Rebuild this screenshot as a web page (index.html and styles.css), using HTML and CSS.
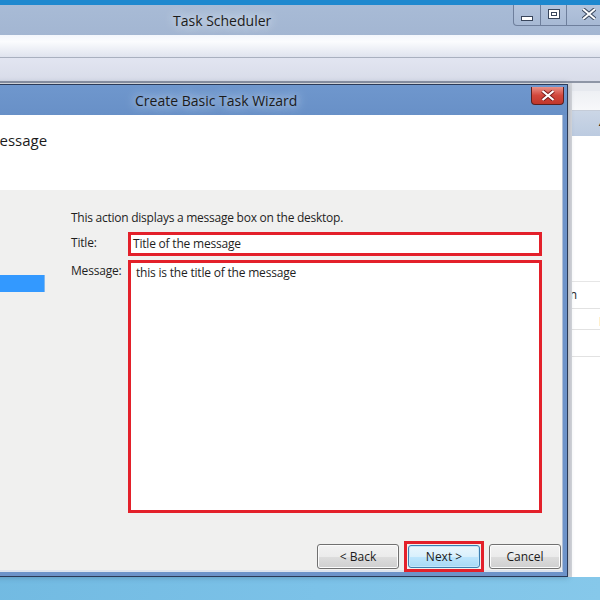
FILE: index.html
```html
<!DOCTYPE html>
<html>
<head>
<meta charset="utf-8">
<link rel="stylesheet" href="styles.css">
</head>
<body>
<div class="desktop">
  <div class="topstrip"></div>
  <div class="mainwin">
    <div class="titlebar">
      <span class="wintitle">Task Scheduler</span>
      <div class="controls">
        <div class="ctl ctl-min"><svg width="12" height="6" viewBox="0 0 12 6"><rect x="0.5" y="0.5" width="11" height="4" fill="#fff" stroke="#39465c"/></svg></div>
        <div class="ctl ctl-max"><svg width="12" height="10" viewBox="0 0 12 10"><rect x="0.5" y="0.5" width="11" height="9" fill="#fff" stroke="#39465c"/><rect x="3.5" y="3.5" width="5" height="3" fill="none" stroke="#39465c"/></svg></div>
        <div class="ctl ctl-close"><svg width="14" height="12" viewBox="0 0 14 12"><path d="M1 1 L13 11 M13 1 L1 11" stroke="#39465c" stroke-width="4"/><path d="M1 1 L13 11 M13 1 L1 11" stroke="#fff" stroke-width="2"/></svg></div>
      </div>
    </div>
    <div class="menubar"></div>
    <div class="toolbar"></div>
    <div class="content">
      <div class="rightpane">
        <div class="rp-top"></div>
        <div class="rp-head"><span class="rp-arrow">▲</span></div>
        <div class="rp-body"></div>
        <div class="rp-row rp-row-a"><span>Action</span></div>
        <div class="rp-row rp-row-b"><span class="rp-b">I</span></div>
        <div class="rp-row rp-row-c"></div>
        <div class="rp-rest"></div>
      </div>
    </div>
  </div>

  <div class="dialog">
    <div class="dlg-titlebar">
      <span class="dlg-title">Create Basic Task Wizard</span>
      <div class="dlg-close"><svg width="14" height="11" viewBox="0 0 14 11"><path d="M1.5 1 L12.5 10 M12.5 1 L1.5 10" stroke="#7a1d1d" stroke-width="4"/><path d="M1.5 1 L12.5 10 M12.5 1 L1.5 10" stroke="#fff" stroke-width="2.2"/></svg></div>
    </div>
    <div class="dlg-client">
      <div class="dlg-header"><span class="dlg-heading">Message</span></div>
      <div class="dlg-body">
        <div class="dlg-nav">
          <div class="nav-sel"></div>
        </div>
        <div class="dlg-main">
          <p class="intro">This action displays a message box on the desktop.</p>
          <div class="field-row">
            <span class="label">Title:</span>
            <div class="input">Title of the message</div>
          </div>
          <div class="field-row">
            <span class="label">Message:</span>
            <div class="textarea">this is the title of the message</div>
          </div>
          <div class="buttons">
            <div class="btn">&lt; Back</div>
            <div class="btn-mark"><div class="btn btn-default">Next &gt;</div></div>
            <div class="btn">Cancel</div>
          </div>
        </div>
      </div>
    </div>
  </div>
</div>
</body>
</html>
```

FILE: styles.css
```css
* { box-sizing: border-box; }
html, body { margin: 0; padding: 0; }
body {
  width: 600px;
  height: 600px;
  overflow: hidden;
  font-family: "Open Sans", "Noto Sans", sans-serif;
  color: #1e1e1e;
}
.desktop {
  position: relative;
  width: 600px;
  height: 600px;
  overflow: hidden;
  background: linear-gradient(100deg, #6fb8e0 0%, #7cc2e8 60%, #86c8ea 100%);
}
.topstrip {
  height: 5px;
  background: #1e88cf;
}
.mainwin {
  height: 572px;
  display: flex;
  flex-direction: column;
  background: #dfe3ee;
}
.titlebar {
  flex-shrink: 0;
  height: 30px;
  display: flex;
  align-items: flex-start;
  background: linear-gradient(#a8bbd6, #a3b6d2);
}
.wintitle {
  margin-left: 173px;
  margin-top: 6px;
  font-size: 14px;
  line-height: 20px;
  color: #1b1b1b;
  text-shadow: 0 0 8px #dfe7f2, 0 0 12px #dfe7f2;
}
.controls {
  margin-left: auto;
  margin-right: -12px;
  display: flex;
  height: 21px;
  border: 1px solid #6e7f9c;
  border-top: none;
  border-radius: 0 0 4px 4px;
  background: linear-gradient(#b3c3dc, #a7b9d4);
}
.ctl {
  display: flex;
  align-items: center;
  justify-content: center;
  border-right: 1px solid #6e7f9c;
}
.ctl-min { width: 27px; padding-top: 7px; }
.ctl-max { width: 26px; padding-bottom: 2px; }
.ctl-close { width: 44px; border-right: none; padding-bottom: 2px; }
.menubar {
  flex-shrink: 0;
  height: 23px;
  background: linear-gradient(#f3f6fc, #fbfcfe 30%, #dfe3ee);
  border-bottom: 1px solid #a9b0bf;
}
.toolbar {
  flex-shrink: 0;
  height: 25px;
  background: linear-gradient(#e2e5f1, #d8dce9);
  border-bottom: 2px solid #8e96a6;
}
.content {
  flex: 1;
  display: flex;
  justify-content: flex-end;
  background: #f0f0f0;
}
.rightpane {
  width: 32px;
  display: flex;
  flex-direction: column;
  background: #fff;
  border-left: 4px solid #d6d8dc;
}
.rp-top {
  flex-shrink: 0;
  height: 28px;
  background: linear-gradient(#eef0f4, #f7f8fa);
  border-top: 8px solid #e6e9ef;
  border-bottom: 1px solid #c5ccd8;
}
.rp-head {
  flex-shrink: 0;
  height: 25px;
  background: linear-gradient(#cbd6e6, #bccbe0);
  position: relative;
}
.rp-arrow {
  position: absolute;
  left: 25px;
  top: 5px;
  font-size: 9px;
  color: #1a1a1a;
}
.rp-body {
  flex-shrink: 0;
  height: 146px;
  border-bottom: 1px solid #e6e6e6;
}
.rp-row {
  flex-shrink: 0;
  height: 27px;
  border-bottom: 1px solid #e2e2e2;
  font-size: 12px;
  line-height: 25px;
  overflow: hidden;
  white-space: nowrap;
}
.rp-row-a span { margin-left: -30px; }
.rp-row-b { height: 21px; }
.rp-b { margin-left: 27px; }
.rp-row-c { height: 27px; }
.rp-rest { flex: 1; }

/* dialog window */
.dialog {
  position: absolute;
  left: -200px;
  top: 84px;
  width: 768px;
  height: 493px;
  display: flex;
  flex-direction: column;
  background: #6d93c9;
  border-right: 1px solid #2b3a57;
  border-bottom: 1px solid #2b3a57;
  box-shadow: 0 0 6px rgba(30, 50, 80, 0.35);
}
.dlg-titlebar {
  flex-shrink: 0;
  height: 31px;
  position: relative;
  background: linear-gradient(#6f97cd, #6890c7);
  border-top: 1px solid #2b3a57;
}
.dlg-title {
  position: absolute;
  left: 335px;
  top: 6px;
  font-size: 14px;
  line-height: 20px;
  color: #1b1b1b;
  text-shadow: 0 0 8px #c5d6ec, 0 0 12px #c5d6ec;
}
.dlg-close {
  position: absolute;
  right: 3px;
  top: 2px;
  width: 33px;
  height: 18px;
  display: flex;
  align-items: center;
  justify-content: center;
  border: 1px solid #5a2020;
  border-top: none;
  border-radius: 0 0 4px 4px;
  background: linear-gradient(#e99086, #d2473c 50%, #c0372c);
}
.dlg-client {
  flex: 1;
  min-height: 0;
  display: flex;
  flex-direction: column;
  margin-right: 4px;
  margin-bottom: 4px;
  background: #f0f0ef;
  border-right: 1px solid #aebed6;
  border-bottom: 2px solid #dfe5ee;
}
.dlg-header {
  flex-shrink: 0;
  height: 75px;
  background: #fff;
  padding-left: 186px;
  padding-top: 14px;
}
.dlg-heading {
  font-size: 15px;
  line-height: 20px;
  color: #1b1b1b;
}
.dlg-body {
  flex: 1;
  min-height: 0;
  display: flex;
}
.dlg-nav {
  width: 271px;
  flex-shrink: 0;
  padding-top: 85px;
}
.nav-sel {
  width: 245px;
  height: 17px;
  background: #3399ff;
  border-right: 1px solid #7fb8f0;
}
.dlg-main {
  flex: 1;
  display: flex;
  flex-direction: column;
  padding-top: 20px;
}
.intro {
  margin: 0 0 6px;
  font-size: 12px;
  line-height: 16px;
  letter-spacing: -0.25px;
}
.field-row {
  display: flex;
  flex-shrink: 0;
  margin-bottom: 4px;
}
.label {
  width: 57px;
  font-size: 12px;
  line-height: 16px;
  padding-top: 3px;
  letter-spacing: -0.2px;
}
.input, .textarea {
  width: 414px;
  flex-shrink: 0;
  background: #fff;
  border: 3px solid #e3202a;
  font-size: 12px;
  line-height: 16px;
  letter-spacing: -0.2px;
}
.input {
  height: 24px;
  padding: 1px 0 0 2px;
}
.textarea {
  height: 253px;
  padding: 2px 0 0 5px;
}
.buttons {
  display: flex;
  flex-shrink: 0;
  align-items: center;
  margin-top: 24px;
  margin-left: 246px;
}
.btn {
  width: 82px;
  height: 25px;
  display: flex;
  align-items: center;
  justify-content: center;
  font-size: 12px;
  color: #1b1b1b;
  border: 1px solid #707070;
  border-radius: 3px;
  background: linear-gradient(#f2f2f2, #ebebeb 50%, #dddddd 51%, #cfcfcf);
  box-shadow: inset 0 0 0 1px #fcfcfc;
}
.btn-mark {
  margin: 0 5px 0 5px;
  border: 3px solid #e3202a;
  padding: 1px;
}
.btn-default {
  width: 70px;
  height: 23px;
  border-color: #3c7fb1;
  background: linear-gradient(#eaf6fd, #d9f0fc 50%, #bee6fd 51%, #a7d9f5);
  box-shadow: inset 0 0 0 1px #c6e8fa;
}
.btn:last-child { width: 72px; }
```
